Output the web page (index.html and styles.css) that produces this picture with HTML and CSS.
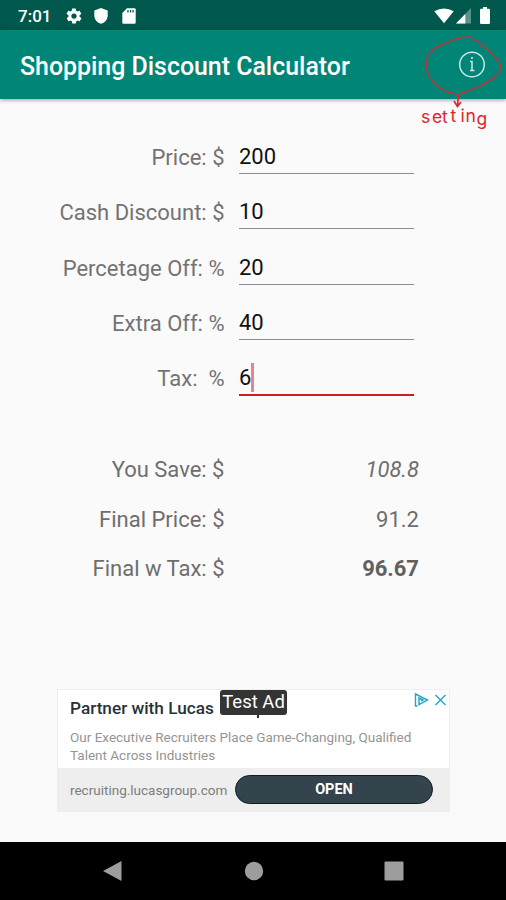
FILE: index.html
```html
<!DOCTYPE html>
<html lang="en">
<head>
    <meta charset="UTF-8">
    <meta name="viewport" content="width=device-width, initial-scale=1.0">
    <title>Shopping Discount Calculator</title>
    <link rel="stylesheet" href="styles.css">
</head>
<body>
    <div class="screen">
        <div class="status-bar">
            <span class="clock">7:01</span>
            <svg class="status-gear" width="18" height="18" viewBox="0 0 24 24"><path fill="#fff" d="M19.4 13c0-.3.1-.6.1-1s0-.7-.1-1l2.1-1.6c.2-.2.3-.4.1-.7l-2-3.400c-.1-.2-.4-.3-.6-.2l-2.500 1c-.5-.4-1.100-.7-1.700-1l-.4-2.600c0-.3-.2-.5-.5-.5h-4c-.2 0-.4.200-.5.400l-.4 2.700c-.6.300-1.200.6-1.700 1l-2.500-1c-.2-.1-.5 0-.6.200l-2 3.500c-.1.200-.1.500.1.600L4.600 11a8 8 0 0 0 0 2l-2.100 1.600c-.2.200-.3.400-.1.700l2 3.400c.1.200.4.300.6.200l2.500-1c.5.400 1.100.7 1.700 1l.4 2.700c0 .2.200.4.500.4h4c.2 0 .4-.2.500-.4l.4-2.700c.6-.3 1.200-.6 1.700-1l2.500 1c.2.100.5 0 .6-.2l2-3.400c.1-.3.1-.5-.1-.7zM12 15.500a3.500 3.500 0 1 1 0-7 3.500 3.500 0 0 1 0 7z"/></svg>
            <svg class="status-shield" width="14" height="16" viewBox="0 0 14 16"><path fill="#fff" d="M7 0l6.700 2.600v4.600c0 4-2.800 7.600-6.700 8.600-3.900-1-6.700-4.600-6.700-8.600V2.600z"/></svg>
            <svg class="status-card" width="14" height="16" viewBox="0 0 14 16"><path fill="#fff" fill-rule="evenodd" d="M5 .3h7.500q1.200 0 1.200 1.200v13q0 1.200-1.200 1.200h-11q-1.200 0-1.200-1.200V5zM5.300 2v2.500h1.300V2zm2.600 0v2.500h1.300V2zm2.500 0v2.500h1.300V2z"/></svg>
            <div class="signal">
                <svg width="20" height="16" viewBox="0 0 20 16"><path fill="#fff" d="M.3 3.300Q10-2.500 19.700 3.300L10 15.200z"/></svg>
                <svg class="cell" width="16" height="16" viewBox="0 0 16 16"><path fill="#5b938b" d="M15 0v15.500H0z"/><path fill="#fff" d="M9.300 6v9.500H0z"/></svg>
                <svg width="10" height="17" viewBox="0 0 10 17"><path fill="#fff" d="M3 0h4v1.700h1.800q1.200 0 1.200 1.200v12.800q0 1.200-1.200 1.200H1.200Q0 16.900 0 15.700V2.900q0-1.200 1.200-1.200H3z"/></svg>
            </div>
        </div>

        <div class="toolbar">
            <h1>Shopping Discount Calculator</h1>
            <svg class="info" width="28" height="28" viewBox="0 0 28 28" fill="none" stroke="#c5e8e3" stroke-width="1.500"><circle cx="14" cy="13.500" r="12.300"/><path d="M12 10.500h2v8.500M12 19.500h4.500"/><circle cx="14" cy="7" r="1.100" fill="#c5e8e3" stroke="none"/></svg>
            <!-- hand drawn note around the info button -->
            <svg class="note" width="86" height="110" viewBox="420 30 86 110">
                <path d="M470 37Q456 37 444 44Q430 49 427 58Q424 71 433 82Q445 94 459 94Q472 90 484 84Q499 76 501 67Q499 61 493 55Q483 44 470 37Z" stroke-dasharray="3 .6"/>
                <path d="M458.500 95L457.500 106M454 101L457.500 106.500L461 102"/>
                <text x="421 432 442 450.500 460.500 465.500 476.500" y="122.500 122.500 122.500 122 121.500 122 124.500">setting</text>
            </svg>
        </div>

        <div class="form">
            <label for="price">Price: $</label>
            <input type="text" id="price" value="200">
            <label for="cash">Cash Discount: $</label>
            <input type="text" id="cash" value="10">
            <label for="percent">Percetage Off: %</label>
            <input type="text" id="percent" value="20">
            <label for="extra">Extra Off: %</label>
            <input type="text" id="extra" value="40">
            <label for="tax">Tax: &nbsp;%</label>
            <div class="active">6<span class="caret"></span></div>
        </div>

        <div class="results">
            <span>You Save: $</span><em>108.8</em>
            <span>Final Price: $</span><span>91.2</span>
            <span>Final w Tax: $</span><strong>96.67</strong>
        </div>

        <div class="ad">
            <div class="ad-body">
                <h2>Partner with Lucas</h2>
                <p>Our Executive Recruiters Place Game-Changing, Qualified<br>Talent Across Industries</p>
                <div class="ad-tail"></div>
                <span class="test-ad">Test Ad</span>
                <svg class="ad-choices" width="34" height="16" viewBox="0 0 34 16" fill="none" stroke="#1ea5cc" stroke-width="1.400"><path d="M3.500 14H1.500V2l12 6L5 12.500V6l4 2-2 1M21.500 3l10 10M31.500 3l-10 10"/></svg>
            </div>
            <div class="ad-footer">
                <span>recruiting.lucasgroup.com</span>
                <button>OPEN</button>
            </div>
        </div>

        <div class="nav-bar">
            <svg width="20" height="22" viewBox="0 0 20 22"><path fill="#9d9d9d" d="M18.500 1v20L0 11z"/></svg>
            <svg width="20" height="20" viewBox="0 0 20 20"><circle cx="10" cy="10" r="9.200" fill="#9d9d9d"/></svg>
            <svg width="20" height="20" viewBox="0 0 20 20"><rect x=".5" y=".5" width="19" height="19" rx="1" fill="#9d9d9d"/></svg>
        </div>
    </div>
</body>
</html>
```
FILE: styles.css
```css
* {
    box-sizing: border-box;
}
body {
    font-family: Roboto, "Liberation Sans", sans-serif;
    background-color: #fafafa;
    margin: 0;
}
.screen {
    width: 506px;
    height: 900px;
    display: flex;
    flex-direction: column;
    overflow: hidden;
}
svg {
    display: block;
    flex: none;
}
.status-bar {
    height: 30px;
    background-color: #00574b;
    display: flex;
    align-items: center;
    padding: 1px 16px 0 18px;
}
.clock {
    color: white;
    font-size: 17px;
    font-weight: 500;
    width: 47px;
}
.status-shield {
    margin-left: 11px;
}
.status-card {
    margin-left: 14px;
}
.signal {
    margin-left: auto;
    display: flex;
    align-items: center;
}
.cell {
    margin: 0 8px 0 2px;
}
.toolbar {
    height: 69px;
    background-color: #008577;
    display: flex;
    align-items: center;
    justify-content: space-between;
    padding: 0 20px;
    position: relative;
    box-shadow: 0 1px 4px rgba(0, 0, 0, 0.4);
}
h1 {
    margin: 3px 0 0;
    color: white;
    font-size: 24.900px;
    font-weight: 500;
    white-space: nowrap;
}
.note {
    position: absolute;
    top: 0;
    right: 0;
    fill: none;
    stroke: #d62c35;
    stroke-width: 1.700;
    overflow: visible;
}
.note text {
    font-family: Inter, sans-serif;
    font-size: 17.500px;
    fill: #e3232b;
    stroke: none;
}
.form {
    display: grid;
    grid-template-columns: 224.500px 175px;
    column-gap: 14.500px;
    grid-auto-rows: 55.300px;
    padding-top: 30px;
    font-size: 22px;
    line-height: 57px;
}
label {
    text-align: right;
    color: #737373;
    white-space: nowrap;
}
input[type="text"], .active {
    font-family: inherit;
    font-size: 22px;
    line-height: 32px;
    width: 175px;
    height: 34px;
    margin-top: 11px;
    padding: 0;
    color: #111;
    background: none;
    border: none;
    border-bottom: 1px solid #8c8c8c;
    outline: none;
}
.active {
    display: flex;
    align-items: center;
    height: 35px;
    border-bottom: 2px solid #c9201f;
}
.caret {
    width: 3px;
    height: 29px;
    background-color: #e28791;
}
.results {
    display: grid;
    grid-template-columns: 224.500px 180px;
    column-gap: 14.500px;
    grid-auto-rows: 49.200px;
    padding-top: 40px;
    color: #6e6e6e;
    font-size: 22px;
    line-height: 49px;
    text-align: right;
}
.results em {
    font-weight: 400;
}
.results strong {
    color: #606060;
}
.ad {
    width: 393px;
    height: 123px;
    margin: auto 0 30px 57px;
    border: 1px solid #eee;
    background-color: white;
}
.ad-body {
    height: 78px;
    padding: 8px 12px;
    position: relative;
}
h2 {
    margin: 0;
    font-size: 17.200px;
    font-weight: 500;
    line-height: 21px;
    color: #263238;
}
.ad p {
    margin: 10px 0 0;
    font-size: 13.500px;
    line-height: 17.500px;
    color: #959595;
    white-space: nowrap;
}
.test-ad {
    position: absolute;
    top: 0;
    left: 162px;
    width: 67px;
    height: 25px;
    border-radius: 3px;
    background-color: #343434;
    color: white;
    font-size: 18.500px;
    line-height: 25px;
    text-align: center;
}
.ad-tail {
    position: absolute;
    top: 24px;
    left: 199px;
    width: 2px;
    height: 4px;
    background-color: #263238;
}
.ad-choices {
    position: absolute;
    top: 2px;
    right: 1px;
}
.ad-footer {
    height: 43px;
    padding: 0 16px 0 12px;
    background-color: #eee;
    display: flex;
    align-items: center;
    justify-content: space-between;
    font-size: 13.500px;
    color: #7d7d7d;
}
.ad-footer button {
    width: 198px;
    height: 29px;
    padding: 0;
    border: 1px solid #101c2b;
    border-radius: 15px;
    background-color: #33444c;
    color: white;
    font-family: inherit;
    font-size: 14.500px;
    font-weight: 700;
}
.nav-bar {
    height: 58px;
    background-color: black;
    display: flex;
    align-items: center;
    justify-content: space-between;
    padding: 0 102px 0 103px;
}
```
